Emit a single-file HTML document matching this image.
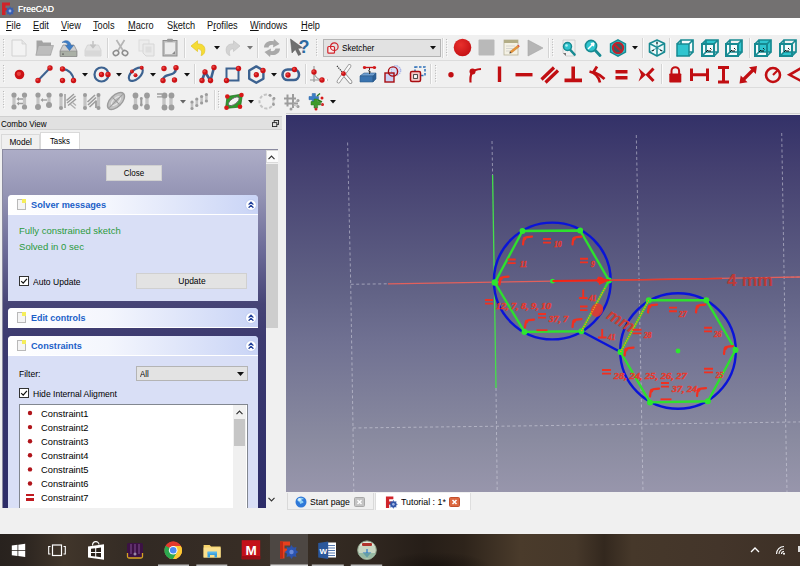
<!DOCTYPE html>
<html><head><meta charset="utf-8"><title>FreeCAD</title>
<style>
*{box-sizing:border-box;margin:0;padding:0}
html,body{width:800px;height:566px;overflow:hidden;background:#f0f0f0;font-family:"Liberation Sans",sans-serif;font-size:9px;color:#000}
.a{position:absolute}
#title{left:0;top:0;width:800px;height:17.5px;background:#737171}
#title span{position:absolute;left:18px;top:3px;color:#fff;font-size:9.8px;transform:scaleX(.885);transform-origin:0 50%;text-shadow:0 0 .5px #fff}
#menu{left:0;top:17.5px;width:800px;height:17.5px;background:#fff}
#menu span{position:absolute;top:2.7px;font-size:10px;transform:scaleX(.92);transform-origin:0 50%;color:#111}
#tb{left:0;top:35px;width:800px;height:78px;background:#f0f0f0}
.hl{position:absolute;left:0;width:800px;height:1px;background:#dcdcdc}
#combo{left:0;top:113px;width:286px;height:397px;background:#f0f0f0}
#view{left:285.5px;top:115px;width:514.5px;height:377.5px;background:linear-gradient(#333168 0%,#444070 14%,#626386 47%,#707192 60%,#8a8ba0 86%,#9896ac 100%)}
#tabs{left:286px;top:492px;width:514px;height:21px;background:#f0f0f0}
#status{left:0;top:510px;width:800px;height:24px;background:#f0f0f0}
#taskbar{left:0;top:534px;width:800px;height:32px;background:#2b231d;box-shadow:inset 0 1px 0 #15110e}

#cvtitle{left:0;top:115.5px;width:282px;height:14.5px;background:#e1e1e1;border-top:1px solid #d0d0d0;border-bottom:1px solid #d0d0d0}
#cvtitle span{position:absolute;left:1px;top:2.5px;font-size:9.3px;transform:scaleX(.87);transform-origin:0 50%}
.tab{position:absolute;font-size:9.3px;text-align:center}
#tabModel{left:1px;top:134px;width:39px;height:15px;background:#f0f0f0;border:1px solid #d9d9d9;border-bottom:none;padding-top:2px}
#tabTasks{left:40px;top:132px;width:40px;height:17px;background:#fff;border:1px solid #d9d9d9;border-bottom:none;padding-top:3px}
#panel{left:2px;top:149px;width:276px;height:359px;background:linear-gradient(#adadc7 0%,#9494b4 12.5%,#6c6b98 28%,#464476 43%,#3d3b70 52%,#2c2c68 100%);border-left:1px solid #8a8aa0;border-top:1px solid #8a8aa0;overflow:hidden}
.btn{position:absolute;background:#e3e3e3;border:1px solid #d0d0d0;font-size:9.3px;text-align:center}
.box{position:absolute;left:5px;width:250px;border-radius:4px 4px 0 0;overflow:hidden;background:#d9dff6}
.box .hd{position:absolute;left:0;top:0;width:100%;height:20px;background:linear-gradient(90deg,#ffffff,#f4f6fd 40%,#c9d4f6);border-bottom:1px solid #fff}
.box .hd b{position:absolute;left:23px;top:4px;font-size:9.4px;color:#2060c8;font-weight:bold;transform-origin:0 50%;white-space:nowrap}
.pg{position:absolute;left:9px;top:4px;width:9px;height:11px;background:#f4f4f4;border:1px solid #b9b9b9}
.pg:after{content:"";position:absolute;right:-1px;top:-1px;width:4px;height:4px;background:#f5ee5a}
.chev{position:absolute;left:238px;top:5px;width:10px;height:10px;border-radius:5px;background:#fff;border:1px solid #c5cff0}
.cb{position:absolute;width:10px;height:10px;background:#fff;border:1px solid #333}
.t{position:absolute;font-size:9.8px;white-space:nowrap;transform-origin:0 50%;transform:scaleX(.949)}
.g{color:#2b9a3d}
</style></head><body>
<div id="title" class="a"><svg class="a" style="left:1px;top:2px" width="14" height="14" viewBox="0 0 14 14"><path d="M1 0.5h8v3H4.5v2.5H8v3H4.5V13H1z" fill="#d0242a"/><g fill="#3a5fb0"><circle cx="9" cy="9" r="3.4"/><path d="M9 4.2l1 1.6h-2zM9 13.8l1-1.6h-2zM4.2 9l1.6 1v-2zM13.8 9l-1.6 1v-2zM5.6 5.6l1.9.5-1.4 1.4zM12.4 12.4l-1.9-.5 1.4-1.4zM12.4 5.6l-.5 1.9-1.4-1.4zM5.6 12.4l.5-1.9 1.4 1.4z"/></g><circle cx="9" cy="9" r="1.4" fill="#9fb4e6"/></svg><span>FreeCAD</span></div>
<div id="menu" class="a">
<span style="left:6px"><u>F</u>ile</span><span style="left:33px"><u>E</u>dit</span><span style="left:61px"><u>V</u>iew</span><span style="left:93px"><u>T</u>ools</span><span style="left:128px"><u>M</u>acro</span><span style="left:167px">S<u>k</u>etch</span><span style="left:207px">P<u>r</u>ofiles</span><span style="left:250px"><u>W</u>indows</span><span style="left:301px"><u>H</u>elp</span>
</div>
<div id="tb" class="a"><i class="hl" style="top:25px"></i><i class="hl" style="top:52px"></i><i class="hl" style="top:78px;background:#d0d0d0"></i><svg class="a" style="left:3px;top:4px" width="3" height="20"><rect x="0" y="0.0" width="1" height="1" fill="#b8b8b8"/><rect x="1" y="1.0" width="1" height="1" fill="#fff"/><rect x="0" y="2.6" width="1" height="1" fill="#b8b8b8"/><rect x="1" y="3.6" width="1" height="1" fill="#fff"/><rect x="0" y="5.2" width="1" height="1" fill="#b8b8b8"/><rect x="1" y="6.2" width="1" height="1" fill="#fff"/><rect x="0" y="7.8" width="1" height="1" fill="#b8b8b8"/><rect x="1" y="8.8" width="1" height="1" fill="#fff"/><rect x="0" y="10.4" width="1" height="1" fill="#b8b8b8"/><rect x="1" y="11.4" width="1" height="1" fill="#fff"/><rect x="0" y="13.0" width="1" height="1" fill="#b8b8b8"/><rect x="1" y="14.0" width="1" height="1" fill="#fff"/><rect x="0" y="15.6" width="1" height="1" fill="#b8b8b8"/><rect x="1" y="16.6" width="1" height="1" fill="#fff"/></svg><svg class="a" style="left:3px;top:30px" width="3" height="20"><rect x="0" y="0.0" width="1" height="1" fill="#b8b8b8"/><rect x="1" y="1.0" width="1" height="1" fill="#fff"/><rect x="0" y="2.6" width="1" height="1" fill="#b8b8b8"/><rect x="1" y="3.6" width="1" height="1" fill="#fff"/><rect x="0" y="5.2" width="1" height="1" fill="#b8b8b8"/><rect x="1" y="6.2" width="1" height="1" fill="#fff"/><rect x="0" y="7.8" width="1" height="1" fill="#b8b8b8"/><rect x="1" y="8.8" width="1" height="1" fill="#fff"/><rect x="0" y="10.4" width="1" height="1" fill="#b8b8b8"/><rect x="1" y="11.4" width="1" height="1" fill="#fff"/><rect x="0" y="13.0" width="1" height="1" fill="#b8b8b8"/><rect x="1" y="14.0" width="1" height="1" fill="#fff"/><rect x="0" y="15.6" width="1" height="1" fill="#b8b8b8"/><rect x="1" y="16.6" width="1" height="1" fill="#fff"/></svg><svg class="a" style="left:3px;top:56px" width="3" height="20"><rect x="0" y="0.0" width="1" height="1" fill="#b8b8b8"/><rect x="1" y="1.0" width="1" height="1" fill="#fff"/><rect x="0" y="2.6" width="1" height="1" fill="#b8b8b8"/><rect x="1" y="3.6" width="1" height="1" fill="#fff"/><rect x="0" y="5.2" width="1" height="1" fill="#b8b8b8"/><rect x="1" y="6.2" width="1" height="1" fill="#fff"/><rect x="0" y="7.8" width="1" height="1" fill="#b8b8b8"/><rect x="1" y="8.8" width="1" height="1" fill="#fff"/><rect x="0" y="10.4" width="1" height="1" fill="#b8b8b8"/><rect x="1" y="11.4" width="1" height="1" fill="#fff"/><rect x="0" y="13.0" width="1" height="1" fill="#b8b8b8"/><rect x="1" y="14.0" width="1" height="1" fill="#fff"/><rect x="0" y="15.6" width="1" height="1" fill="#b8b8b8"/><rect x="1" y="16.6" width="1" height="1" fill="#fff"/></svg><svg class="a" style="left:11.3px;top:3.8px" width="16" height="18" viewBox="0 0 16 18"><path d="M1 1h10l4 4v12H1z" fill="#f3f3f3" stroke="#d2d2d2" stroke-width="1"/><path d="M11 1v4h4" fill="#e6e6e6" stroke="#d2d2d2" stroke-width="0.8"/></svg><svg class="a" style="left:34.8px;top:3.8px" width="19" height="17" viewBox="0 0 19 17"><path d="M1.500 16V1.500h5.500l1 2h8V16z" fill="#a3a3a3"/><path d="M0.800 16.300L3.500 6.500h15L15.500 16.300z" fill="#bdbdbd" stroke="#9a9a9a" stroke-width="0.600"/></svg><svg class="a" style="left:59.0px;top:3.5px" width="19" height="19" viewBox="0 0 19 19"><path d="M1 12L4 6h11l3 6v5.5H1z" fill="#cfcfcf" stroke="#8f8f8f" stroke-width="0.8"/><rect x="1.300" y="12" width="16.400" height="5.500" fill="#aab0a6" stroke="#8a8a8a" stroke-width="0.600"/><rect x="3" y="14.5" width="2" height="1.2" fill="#666"/><path d="M3 3.500C6 0.500 11.500 1 12 6.500L14.500 6.500L10.500 11.500L6.500 6.500L9 6.500C8.800 3.800 5.500 3 3 3.500z" fill="#3d7ec8" stroke="#2b5f9e" stroke-width="0.500"/></svg><svg class="a" style="left:83.7px;top:4.5px" width="18" height="17" viewBox="0 0 18 17"><path d="M1 10L3.5 5h11L17 10v6H1z" fill="#e3e3e3" stroke="#cfcfcf" stroke-width="0.8"/><rect x="1.3" y="10.5" width="15.4" height="5" fill="#d8d8d8"/><path d="M9 1v6M6.5 4.5L9 7.5L11.5 4.5" stroke="#c2c2c2" stroke-width="1.5" fill="none"/></svg><i class="a" style="left:107px;top:3px;width:1px;height:20px;background:#d4d4d4"></i><i class="a" style="left:108px;top:3px;width:1px;height:20px;background:#fbfbfb"></i><svg class="a" style="left:112.0px;top:4.0px" width="17" height="18" viewBox="0 0 17 18"><path d="M4.5 1L11 11.5M12.5 1L6 11.5" stroke="#b5b5b5" stroke-width="1.7" fill="none"/><ellipse cx="4" cy="14" rx="2.8" ry="2.4" fill="none" stroke="#8d8d8d" stroke-width="1.6" transform="rotate(-30 4 14)"/><ellipse cx="13" cy="14" rx="2.8" ry="2.4" fill="none" stroke="#8d8d8d" stroke-width="1.6" transform="rotate(30 13 14)"/></svg><svg class="a" style="left:137.5px;top:4.0px" width="17" height="18" viewBox="0 0 17 18"><rect x="1" y="1" width="10" height="11" fill="#ececec" stroke="#dcdcdc"/><path d="M5 5h11v12h-8l-3-3z" fill="#eaeaea" stroke="#d6d6d6"/><rect x="7.5" y="7.5" width="6" height="6" fill="#dedede"/></svg><svg class="a" style="left:162.0px;top:3.0px" width="16" height="19" viewBox="0 0 16 19"><rect x="1" y="2.5" width="14" height="15.5" fill="#bdbdbd" stroke="#8f8f8f"/><rect x="3" y="4.5" width="10" height="11.5" fill="#ececec"/><rect x="5" y="0.8" width="6" height="3" rx="1" fill="#9a9a9a"/><path d="M13 13l-3 3h3z" fill="#8a8a8a"/></svg><i class="a" style="left:184px;top:3px;width:1px;height:20px;background:#d4d4d4"></i><i class="a" style="left:185px;top:3px;width:1px;height:20px;background:#fbfbfb"></i><svg class="a" style="left:190.0px;top:5.0px" width="17" height="16" viewBox="0 0 17 16"><path d="M1 6L7.5 0.8V4C13 3.5 16 7 14.5 12.5C14 14 12.5 15.3 11 15.5C12.5 12 11.5 8.7 7.5 8.8V11.5z" fill="#f5dc35" stroke="#e3c423" stroke-width="0.7" stroke-linejoin="round"/></svg><svg class="a" style="left:213.5px;top:11.0px" width="6" height="4"><path d="M0 0h6l-3 3.5z" fill="#111"/></svg><svg class="a" style="left:223.5px;top:5.0px" width="17" height="16" viewBox="0 0 17 16"><path d="M16 6L9.5 0.8V4C4 3.5 1 7 2.5 12.5C3 14 4.5 15.3 6 15.5C4.5 12 5.5 8.7 9.5 8.8V11.5z" fill="#d3d3d3" stroke="#c4c4c4" stroke-width="0.7" stroke-linejoin="round"/></svg><svg class="a" style="left:247px;top:11.0px" width="6" height="4"><path d="M0 0h6l-3 3.5z" fill="#777"/></svg><i class="a" style="left:257px;top:3px;width:1px;height:20px;background:#d4d4d4"></i><i class="a" style="left:258px;top:3px;width:1px;height:20px;background:#fbfbfb"></i><svg class="a" style="left:263.0px;top:3.5px" width="18" height="18" viewBox="0 0 18 18"><path d="M1 8.5C1 3.500 6 1 10.500 2.200L11 0L16.500 5L10 8.500L10.300 6C8 5.500 5.800 6.500 5.500 8.500z" fill="#a9a9a9"/><path d="M17 9.500C17 14.500 12 17 7.500 15.800L7 18L1.500 13L8 9.500L7.700 12C10 12.500 12.200 11.500 12.500 9.500z" fill="#a9a9a9"/></svg><i class="a" style="left:286px;top:3px;width:1px;height:20px;background:#d4d4d4"></i><i class="a" style="left:287px;top:3px;width:1px;height:20px;background:#fbfbfb"></i><svg class="a" style="left:289.0px;top:3.0px" width="22" height="19" viewBox="0 0 22 19"><path d="M1.5 1L3 15L6.3 11.5L9.5 17.5L12 16.2L8.9 10.4L13.5 9.8z" fill="#6f6f6f" stroke="#555" stroke-width="0.5"/><text x="9.5" y="14.5" font-family="Liberation Sans, sans-serif" font-weight="bold" font-size="18" fill="#2d6a9f">?</text></svg><svg class="a" style="left:316px;top:4px" width="3" height="20"><rect x="0" y="0.0" width="1" height="1" fill="#b8b8b8"/><rect x="1" y="1.0" width="1" height="1" fill="#fff"/><rect x="0" y="2.6" width="1" height="1" fill="#b8b8b8"/><rect x="1" y="3.6" width="1" height="1" fill="#fff"/><rect x="0" y="5.2" width="1" height="1" fill="#b8b8b8"/><rect x="1" y="6.2" width="1" height="1" fill="#fff"/><rect x="0" y="7.8" width="1" height="1" fill="#b8b8b8"/><rect x="1" y="8.8" width="1" height="1" fill="#fff"/><rect x="0" y="10.4" width="1" height="1" fill="#b8b8b8"/><rect x="1" y="11.4" width="1" height="1" fill="#fff"/><rect x="0" y="13.0" width="1" height="1" fill="#b8b8b8"/><rect x="1" y="14.0" width="1" height="1" fill="#fff"/><rect x="0" y="15.6" width="1" height="1" fill="#b8b8b8"/><rect x="1" y="16.6" width="1" height="1" fill="#fff"/></svg><div class="a" style="left:323px;top:4px;width:118px;height:18px;background:#e2e2e2;border:1px solid #b4b4b4"></div><svg class="a" style="left:327.0px;top:6.5px" width="12" height="12" viewBox="0 0 12 12"><rect x="0.8" y="4.5" width="6.7" height="6.7" rx="1" fill="#fbeaea" stroke="#d0222a" stroke-width="1.2"/><circle cx="7.3" cy="4.7" r="3.8" fill="none" stroke="#d0222a" stroke-width="1.2"/></svg><span class="t" style="left:342px;top:7.2px;transform:scaleX(.835)">Sketcher</span><svg class="a" style="left:430px;top:11.0px" width="6" height="4"><path d="M0 0h6l-3 3.5z" fill="#111"/></svg><i class="a" style="left:442px;top:3px;width:1px;height:20px;background:#d4d4d4"></i><i class="a" style="left:443px;top:3px;width:1px;height:20px;background:#fbfbfb"></i><svg class="a" style="left:446px;top:4px" width="3" height="20"><rect x="0" y="0.0" width="1" height="1" fill="#b8b8b8"/><rect x="1" y="1.0" width="1" height="1" fill="#fff"/><rect x="0" y="2.6" width="1" height="1" fill="#b8b8b8"/><rect x="1" y="3.6" width="1" height="1" fill="#fff"/><rect x="0" y="5.2" width="1" height="1" fill="#b8b8b8"/><rect x="1" y="6.2" width="1" height="1" fill="#fff"/><rect x="0" y="7.8" width="1" height="1" fill="#b8b8b8"/><rect x="1" y="8.8" width="1" height="1" fill="#fff"/><rect x="0" y="10.4" width="1" height="1" fill="#b8b8b8"/><rect x="1" y="11.4" width="1" height="1" fill="#fff"/><rect x="0" y="13.0" width="1" height="1" fill="#b8b8b8"/><rect x="1" y="14.0" width="1" height="1" fill="#fff"/><rect x="0" y="15.6" width="1" height="1" fill="#b8b8b8"/><rect x="1" y="16.6" width="1" height="1" fill="#fff"/></svg><svg class="a" style="left:452.5px;top:3.0px" width="19" height="19" viewBox="0 0 19 19"><defs><radialGradient id="rg" cx="0.4" cy="0.35" r="0.7"><stop offset="0" stop-color="#e8302c"/><stop offset="1" stop-color="#c41014"/></radialGradient></defs><circle cx="9.5" cy="9.5" r="8.8" fill="url(#rg)"/></svg><svg class="a" style="left:477.5px;top:4.0px" width="17" height="17" viewBox="0 0 17 17"><rect x="0.5" y="0.5" width="16" height="16" rx="1" fill="#b9b9b9"/></svg><svg class="a" style="left:502.5px;top:4.0px" width="17" height="17" viewBox="0 0 17 17"><rect x="1" y="1" width="14" height="15" fill="#f4f1e4" stroke="#b8b39a" stroke-width="0.8"/><rect x="1" y="1" width="14" height="3" fill="#b3ad86"/><path d="M3 7h9M3 9.5h7M3 12h5" stroke="#c9c9c9" stroke-width="0.7"/><path d="M7 12.5L14.5 6.5L16 8L8.5 14z" fill="#e8963a" stroke="#b86a1e" stroke-width="0.4"/><path d="M7 12.5L6.3 14.6L8.5 14z" fill="#333"/><path d="M14.5 6.5L15.4 5.8L16.8 7.3L16 8z" fill="#d8484a"/></svg><svg class="a" style="left:526.5px;top:3.5px" width="17" height="18" viewBox="0 0 17 18"><path d="M1 1L16 9L1 17z" fill="#b5b5b5" stroke="#a5a5a5" stroke-width="0.6"/></svg><i class="a" style="left:548px;top:3px;width:1px;height:20px;background:#d4d4d4"></i><i class="a" style="left:549px;top:3px;width:1px;height:20px;background:#fbfbfb"></i><svg class="a" style="left:552px;top:4px" width="3" height="20"><rect x="0" y="0.0" width="1" height="1" fill="#b8b8b8"/><rect x="1" y="1.0" width="1" height="1" fill="#fff"/><rect x="0" y="2.6" width="1" height="1" fill="#b8b8b8"/><rect x="1" y="3.6" width="1" height="1" fill="#fff"/><rect x="0" y="5.2" width="1" height="1" fill="#b8b8b8"/><rect x="1" y="6.2" width="1" height="1" fill="#fff"/><rect x="0" y="7.8" width="1" height="1" fill="#b8b8b8"/><rect x="1" y="8.8" width="1" height="1" fill="#fff"/><rect x="0" y="10.4" width="1" height="1" fill="#b8b8b8"/><rect x="1" y="11.4" width="1" height="1" fill="#fff"/><rect x="0" y="13.0" width="1" height="1" fill="#b8b8b8"/><rect x="1" y="14.0" width="1" height="1" fill="#fff"/><rect x="0" y="15.6" width="1" height="1" fill="#b8b8b8"/><rect x="1" y="16.6" width="1" height="1" fill="#fff"/></svg><svg class="a" style="left:560.5px;top:3.5px" width="16" height="18" viewBox="0 0 16 18"><path d="M2 1h12v16H5l-3-3z" fill="#f1f1f1" stroke="#c9c9c9" stroke-width="0.8"/><path d="M2 14l3 3v-3z" fill="#777"/><path d="M8.5 10L13.5 15.5" stroke="#178a92" stroke-width="2.6" stroke-linecap="round"/><circle cx="6.5" cy="7.5" r="4" fill="#2fc5cf" stroke="#178a92" stroke-width="1.5"/><circle cx="5.5" cy="6.5" r="1.3" fill="#b8f0f4"/></svg><svg class="a" style="left:584.0px;top:3.5px" width="18" height="18" viewBox="0 0 18 18"><path d="M10 10L16 16.5" stroke="#178a92" stroke-width="2.8" stroke-linecap="round"/><circle cx="7" cy="7" r="5.6" fill="#2fc5cf" stroke="#178a92" stroke-width="1.6"/><path d="M4 10L10 4M10 4L6.8 4.8M10 4L9.2 7.2" stroke="#fff" stroke-width="1.5" fill="none"/></svg><svg class="a" style="left:608.5px;top:3.5px" width="18" height="18" viewBox="0 0 18 18"><path d="M9 0.8L16.5 5v8L9 17.2L1.5 13V5z" fill="#2fc5cf" stroke="#178a92" stroke-width="1.4"/><circle cx="9" cy="9" r="5.2" fill="#3a5a60" stroke="#c2202a" stroke-width="2"/><path d="M5.5 5.5L12.5 12.5" stroke="#c2202a" stroke-width="2.2"/></svg><svg class="a" style="left:631.5px;top:11.0px" width="6" height="4"><path d="M0 0h6l-3 3.5z" fill="#111"/></svg><i class="a" style="left:642px;top:3px;width:1px;height:20px;background:#d4d4d4"></i><i class="a" style="left:643px;top:3px;width:1px;height:20px;background:#fbfbfb"></i><svg class="a" style="left:647.5px;top:3.5px" width="18" height="18" viewBox="0 0 18 18"><path d="M9 1L16.5 4.5V13L9 17L1.5 13V4.5z" fill="#eef9fa" stroke="#178a92" stroke-width="1.6" stroke-linejoin="round"/><path d="M1.5 4.5L9 8.5L16.5 4.5M9 8.5V17" stroke="#178a92" stroke-width="1.5" fill="none"/><path d="M9 1v7.5M1.5 13L9 9M16.5 13L9 9" stroke="#178a92" stroke-width="0.8" fill="none"/><path d="M4 12l2-1M12 11l2 1M9 3v2" stroke="#111" stroke-width="1"/></svg><i class="a" style="left:669px;top:3px;width:1px;height:20px;background:#d4d4d4"></i><i class="a" style="left:670px;top:3px;width:1px;height:20px;background:#fbfbfb"></i><svg class="a" style="left:676.0px;top:3.5px" width="18" height="18" viewBox="0 0 18 18"><path d="M5 1h12v12H5z" fill="#f4fbfc"/><path d="M5 1h12v12H5zM1 5L5 1M13 5l4-4M13 17l4-4M1 17l4-4" fill="none" stroke="#178a92" stroke-width="1.700"/><path d="M1 5h12v12H1z" fill="#2fc5cf" stroke="#178a92" stroke-width="1.5"/></svg><svg class="a" style="left:700.5px;top:3.5px" width="18" height="18" viewBox="0 0 18 18"><path d="M1 5h12v12H1z" fill="#f4fbfc"/><path d="M1 5L5 1h12l-4 4z" fill="#2fc5cf"/><path d="M5 1h12v12H5zM1 5L5 1M13 5l4-4M13 17l4-4M1 17l4-4" fill="none" stroke="#178a92" stroke-width="1.700"/><path d="M1 5h12v12H1z" fill="none" stroke="#178a92" stroke-width="2"/><path d="M5 13l2-2M9 9l1.5 1.5M7 12h3" stroke="#111" stroke-width="1"/></svg><svg class="a" style="left:725.0px;top:3.5px" width="18" height="18" viewBox="0 0 18 18"><path d="M1 5h12v12H1z" fill="#f4fbfc"/><path d="M13 5l4-4v12l-4 4z" fill="#2fc5cf"/><path d="M5 1h12v12H5zM1 5L5 1M13 5l4-4M13 17l4-4M1 17l4-4" fill="none" stroke="#178a92" stroke-width="1.700"/><path d="M1 5h12v12H1z" fill="none" stroke="#178a92" stroke-width="2"/><path d="M5 13l2-2M9 9l1.5 1.5M7 12h3" stroke="#111" stroke-width="1"/></svg><i class="a" style="left:749px;top:3px;width:1px;height:20px;background:#d4d4d4"></i><i class="a" style="left:750px;top:3px;width:1px;height:20px;background:#fbfbfb"></i><svg class="a" style="left:754.0px;top:3.5px" width="18" height="18" viewBox="0 0 18 18"><path d="M1 5h12v12H1z" fill="#f4fbfc"/><path d="M5 1h12v12H5z" fill="#2fc5cf"/><path d="M5 1h12v12H5zM1 5L5 1M13 5l4-4M13 17l4-4M1 17l4-4" fill="none" stroke="#178a92" stroke-width="1.700"/><path d="M1 5h12v12H1z" fill="none" stroke="#178a92" stroke-width="2"/><path d="M5 13l2-2M9 9l1.5 1.5M7 12h3" stroke="#111" stroke-width="1"/></svg><svg class="a" style="left:779.0px;top:3.5px" width="18" height="18" viewBox="0 0 18 18"><path d="M1 5h12v12H1z" fill="#f4fbfc"/><path d="M1 17l4-4h12l-4 4z" fill="#2fc5cf"/><path d="M5 1h12v12H5zM1 5L5 1M13 5l4-4M13 17l4-4M1 17l4-4" fill="none" stroke="#178a92" stroke-width="1.700"/><path d="M1 5h12v12H1z" fill="none" stroke="#178a92" stroke-width="2"/><path d="M5 13l2-2M9 9l1.5 1.5M7 12h3" stroke="#111" stroke-width="1"/></svg><svg class="a" style="left:0;top:26px" width="800" height="26" viewBox="0 61 800 26"><circle cx="19.5" cy="74.5" r="4.8" fill="#cc1216"/><circle cx="18.9" cy="73.8" r="2.16" fill="#e8403c"/><path d="M38 80.5L50 68" stroke="#3c6290" stroke-width="2"/><circle cx="38" cy="80.5" r="2.7" fill="#cc1216"/><circle cx="37.4" cy="79.8" r="1.22" fill="#e8403c"/><circle cx="50" cy="68" r="2.7" fill="#cc1216"/><circle cx="49.4" cy="67.3" r="1.22" fill="#e8403c"/><path d="M62.5 69A11.5 11.5 0 0 1 73.5 80.5" stroke="#3c6290" stroke-width="2" fill="none"/><circle cx="62.5" cy="69" r="2.7" fill="#cc1216"/><circle cx="61.9" cy="68.3" r="1.22" fill="#e8403c"/><circle cx="62.5" cy="80.5" r="2.7" fill="#cc1216"/><circle cx="61.9" cy="79.8" r="1.22" fill="#e8403c"/><circle cx="73.5" cy="80.5" r="2.7" fill="#cc1216"/><circle cx="72.9" cy="79.8" r="1.22" fill="#e8403c"/><circle cx="101.5" cy="74.5" r="7" fill="none" stroke="#3c6290" stroke-width="2.2"/><circle cx="101.5" cy="74.5" r="2.7" fill="#cc1216"/><circle cx="100.9" cy="73.8" r="1.22" fill="#e8403c"/><circle cx="108" cy="74.5" r="2.7" fill="#cc1216"/><circle cx="107.4" cy="73.8" r="1.22" fill="#e8403c"/><ellipse cx="135.8" cy="74.3" rx="8.5" ry="4.6" transform="rotate(-42 135.8 74.3)" fill="none" stroke="#3c6290" stroke-width="2.2"/><circle cx="132" cy="71.5" r="2" fill="#cc1216"/><circle cx="131.4" cy="70.8" r="0.90" fill="#e8403c"/><circle cx="141.7" cy="67.8" r="2" fill="#cc1216"/><circle cx="141.1" cy="67.1" r="0.90" fill="#e8403c"/><circle cx="135.5" cy="75.2" r="2" fill="#cc1216"/><circle cx="134.9" cy="74.5" r="0.90" fill="#e8403c"/><path d="M163 80.5C163 72 176 78 176 68" stroke="#3c6290" stroke-width="2.400" fill="none"/><circle cx="164" cy="68.5" r="2.7" fill="#cc1216"/><circle cx="163.4" cy="67.8" r="1.22" fill="#e8403c"/><circle cx="176" cy="67.7" r="2.7" fill="#cc1216"/><circle cx="175.4" cy="67.0" r="1.22" fill="#e8403c"/><circle cx="163" cy="80.5" r="2.7" fill="#cc1216"/><circle cx="162.4" cy="79.8" r="1.22" fill="#e8403c"/><circle cx="174.5" cy="80" r="2.7" fill="#cc1216"/><circle cx="173.9" cy="79.3" r="1.22" fill="#e8403c"/><path d="M202 80.5L205 72L210.5 80.5L214 67.5" stroke="#3c6290" stroke-width="2.600" fill="none"/><circle cx="202" cy="80.5" r="2.7" fill="#cc1216"/><circle cx="201.4" cy="79.8" r="1.22" fill="#e8403c"/><circle cx="205" cy="72" r="2.7" fill="#cc1216"/><circle cx="204.4" cy="71.3" r="1.22" fill="#e8403c"/><circle cx="210.5" cy="80.5" r="2.7" fill="#cc1216"/><circle cx="209.9" cy="79.8" r="1.22" fill="#e8403c"/><circle cx="214" cy="67.5" r="2.7" fill="#cc1216"/><circle cx="213.4" cy="66.8" r="1.22" fill="#e8403c"/><rect x="226.5" y="68.5" width="12" height="12" fill="none" stroke="#3c6290" stroke-width="2"/><circle cx="238.5" cy="68.5" r="2.7" fill="#cc1216"/><circle cx="237.9" cy="67.8" r="1.22" fill="#e8403c"/><circle cx="226.5" cy="80.5" r="2.7" fill="#cc1216"/><circle cx="225.9" cy="79.8" r="1.22" fill="#e8403c"/><path d="M256.3 66.400L263.400 70.500V78.700L256.300 82.800L249.200 78.700V70.500z" fill="none" stroke="#3c6290" stroke-width="2.400" stroke-linejoin="round"/><circle cx="256.3" cy="74.8" r="2.7" fill="#cc1216"/><circle cx="255.70000000000002" cy="74.1" r="1.22" fill="#e8403c"/><circle cx="263" cy="70.5" r="2.7" fill="#cc1216"/><circle cx="262.4" cy="69.8" r="1.22" fill="#e8403c"/><rect x="282.5" y="69.5" width="16.5" height="10.5" rx="5.2" fill="none" stroke="#3c6290" stroke-width="2.600"/><circle cx="288" cy="75" r="2.7" fill="#cc1216"/><circle cx="287.4" cy="74.3" r="1.22" fill="#e8403c"/><circle cx="294.5" cy="69.5" r="2.7" fill="#cc1216"/><circle cx="293.9" cy="68.8" r="1.22" fill="#e8403c"/><path d="M314 66v16M310 80h18" stroke="#9a9a9a" stroke-width="1.2"/><path d="M314 72Q315 79 322 80" stroke="#888" stroke-width="1" fill="none"/><path d="M322 80h5" stroke="#fff" stroke-width="2"/><circle cx="314" cy="72" r="2.7" fill="#cc1216"/><circle cx="313.4" cy="71.3" r="1.22" fill="#e8403c"/><circle cx="322" cy="80" r="2.7" fill="#cc1216"/><circle cx="321.4" cy="79.3" r="1.22" fill="#e8403c"/><path d="M343.500 73.700L350.500 82" stroke="#8a8a8a" stroke-width="3.800" stroke-linecap="round"/><path d="M343.500 73.700L350.500 82" stroke="#fafafa" stroke-width="2.200" stroke-linecap="round"/><path d="M349.500 66L338.500 81.500" stroke="#8a8a8a" stroke-width="3.800" stroke-linecap="round"/><path d="M349.500 66L338.500 81.500" stroke="#fafafa" stroke-width="2.200" stroke-linecap="round"/><path d="M337 66l6 7" stroke="#333" stroke-width="1.200" stroke-dasharray="1.200 1"/><circle cx="343.5" cy="73.7" r="2.4" fill="#cc1216"/><circle cx="342.9" cy="73.0" r="1.08" fill="#e8403c"/><path d="M360 76l4-3h12l-3 3z" fill="#6f9fd0" stroke="#2b5a8a" stroke-width="0.6"/><path d="M360 76h13v6h-13z" fill="#3a74b0" stroke="#2b5a8a" stroke-width="0.6"/><path d="M373 76l3-3v6l-3 3z" fill="#2c5f95" stroke="#2b5a8a" stroke-width="0.6"/><path d="M364.5 67.5h10" stroke="#cc1216" stroke-width="1.4"/><path d="M369.5 68v2l-1 1l2 1l-1.5 1l1 1" stroke="#333" stroke-width="1" fill="none"/><circle cx="364.5" cy="67.5" r="1.6" fill="#cc1216"/><circle cx="363.9" cy="66.8" r="0.72" fill="#e8403c"/><circle cx="374.5" cy="67.5" r="1.6" fill="#cc1216"/><circle cx="373.9" cy="66.8" r="0.72" fill="#e8403c"/><circle cx="396" cy="70.5" r="4.8" fill="#d6dcf6" stroke="#8fa0e0" stroke-width="1" stroke-dasharray="1.5 1"/><rect x="385" y="73" width="9" height="9" fill="#c9d2f4" stroke="#a80c10" stroke-width="1.4"/><circle cx="393" cy="71.5" r="4.6" fill="none" stroke="#a80c10" stroke-width="1.4"/><rect x="415" y="67" width="10" height="8.5" fill="none" stroke="#2d6fb8" stroke-width="1.5" stroke-dasharray="2.5 1.5"/><rect x="410.5" y="71.5" width="10" height="10" rx="1.5" fill="#f6c9c9" stroke="#a80c10" stroke-width="1.5"/><rect x="413.6" y="74.6" width="3.8" height="3.8" fill="#fff" stroke="#333" stroke-width="0.9"/><circle cx="451" cy="74.8" r="2.7" fill="#c10e12"/><path d="M470.5 82.5C470 75 471 69.5 481 69" stroke="#c10e12" stroke-width="2.2" fill="none"/><circle cx="472.5" cy="71.5" r="3" fill="#c10e12"/><path d="M499.5 66.5v15.5" stroke="#c10e12" stroke-width="3.4"/><path d="M515.500 74.700h17" stroke="#c10e12" stroke-width="3.400"/><path d="M541.5 79.5L554 67.5M545.5 82.5L558 70.5" stroke="#c10e12" stroke-width="3.200"/><path d="M564.500 80.400h17.500M573.200 80.700V66.500" stroke="#c10e12" stroke-width="3.600"/><path d="M597 66.500L593.500 72Q599 74 604.500 79" stroke="#c10e12" stroke-width="2.800" fill="none"/><path d="M589.500 71.500Q598 73.500 600 82.500" stroke="#c10e12" stroke-width="2.600" fill="none"/><path d="M615.500 71.800h12M615.500 77.800h12" stroke="#c10e12" stroke-width="3.400"/><path d="M638.500 68L646 74.700L638.500 81.500L641 74.700z" fill="#c10e12"/><path d="M653.500 68.500L647.500 74.700L653.500 81" stroke="#c10e12" stroke-width="3" fill="none"/><path d="M671.5 74v-3a3.8 3.8 0 0 1 7.6 0v3" stroke="#c10e12" stroke-width="2" fill="none"/><rect x="669.3" y="73.5" width="12" height="9" rx="0.8" fill="#c10e12"/><path d="M691.500 68.500v12.500M707.500 68.500v12.500M691.500 74.800h16" stroke="#c10e12" stroke-width="3"/><path d="M718 67.500h11M718 82h11M723.500 67.500v14.500" stroke="#c10e12" stroke-width="3"/><path d="M742 81L754.500 68.500" stroke="#c10e12" stroke-width="3.200"/><path d="M739.500 83.500l1.200-8l6.800 6.800zM757 66l-8 1.200l6.800 6.800z" fill="#c10e12"/><circle cx="773" cy="75" r="7" fill="none" stroke="#c10e12" stroke-width="2.600"/><path d="M773 75l5.500-5.500" stroke="#c10e12" stroke-width="2.200"/><path d="M803 67L789.500 74.800L803 82z" stroke="#c10e12" stroke-width="2.600" fill="none"/></svg><svg class="a" style="left:82px;top:38.0px" width="6" height="4"><path d="M0 0h6l-3 3.5z" fill="#111"/></svg><svg class="a" style="left:115.5px;top:38.0px" width="6" height="4"><path d="M0 0h6l-3 3.5z" fill="#111"/></svg><svg class="a" style="left:149.5px;top:38.0px" width="6" height="4"><path d="M0 0h6l-3 3.5z" fill="#111"/></svg><svg class="a" style="left:183.5px;top:38.0px" width="6" height="4"><path d="M0 0h6l-3 3.5z" fill="#111"/></svg><svg class="a" style="left:270.5px;top:38.0px" width="6" height="4"><path d="M0 0h6l-3 3.5z" fill="#111"/></svg><i class="a" style="left:194px;top:29px;width:1px;height:20px;background:#d4d4d4"></i><i class="a" style="left:195px;top:29px;width:1px;height:20px;background:#fbfbfb"></i><i class="a" style="left:305px;top:29px;width:1px;height:20px;background:#d4d4d4"></i><i class="a" style="left:306px;top:29px;width:1px;height:20px;background:#fbfbfb"></i><i class="a" style="left:430px;top:29px;width:1px;height:20px;background:#d4d4d4"></i><i class="a" style="left:431px;top:29px;width:1px;height:20px;background:#fbfbfb"></i><svg class="a" style="left:435px;top:30px" width="3" height="20"><rect x="0" y="0.0" width="1" height="1" fill="#b8b8b8"/><rect x="1" y="1.0" width="1" height="1" fill="#fff"/><rect x="0" y="2.6" width="1" height="1" fill="#b8b8b8"/><rect x="1" y="3.6" width="1" height="1" fill="#fff"/><rect x="0" y="5.2" width="1" height="1" fill="#b8b8b8"/><rect x="1" y="6.2" width="1" height="1" fill="#fff"/><rect x="0" y="7.8" width="1" height="1" fill="#b8b8b8"/><rect x="1" y="8.8" width="1" height="1" fill="#fff"/><rect x="0" y="10.4" width="1" height="1" fill="#b8b8b8"/><rect x="1" y="11.4" width="1" height="1" fill="#fff"/><rect x="0" y="13.0" width="1" height="1" fill="#b8b8b8"/><rect x="1" y="14.0" width="1" height="1" fill="#fff"/><rect x="0" y="15.6" width="1" height="1" fill="#b8b8b8"/><rect x="1" y="16.6" width="1" height="1" fill="#fff"/></svg><i class="a" style="left:661px;top:29px;width:1px;height:20px;background:#d4d4d4"></i><i class="a" style="left:662px;top:29px;width:1px;height:20px;background:#fbfbfb"></i><svg class="a" style="left:0;top:53px" width="800" height="26" viewBox="0 87 800 26"><path d="M14 94v12M24.5 94v12" stroke="#c4c4c4" stroke-width="3.2"/><circle cx="14" cy="94" r="2.6" fill="#9c9c9c"/><circle cx="24.5" cy="94" r="2.6" fill="#9c9c9c"/><circle cx="14" cy="106" r="2.6" fill="#9c9c9c"/><circle cx="24.5" cy="106" r="2.6" fill="#9c9c9c"/><path d="M23 98h-5M23 102.5h-5" stroke="#9c9c9c" stroke-width="1.4"/><path d="M16.5 98l2.5-2v4zM16.5 102.5l2.5-2v4z" fill="#9c9c9c"/><path d="M38 94v12" stroke="#c4c4c4" stroke-width="3.2"/><path d="M49 94v10" stroke="#c4c4c4" stroke-width="3.2"/><circle cx="38" cy="94" r="2.6" fill="#9c9c9c"/><circle cx="49" cy="94" r="2.6" fill="#9c9c9c"/><circle cx="38" cy="106" r="3" fill="#9c9c9c"/><circle cx="49" cy="104" r="3" fill="#9c9c9c"/><path d="M47 99h-5" stroke="#9c9c9c" stroke-width="1.4"/><path d="M40.5 99l2.5-2v4z" fill="#9c9c9c"/><path d="M61 94v13" stroke="#c4c4c4" stroke-width="3.2"/><circle cx="61" cy="94" r="2" fill="#9c9c9c"/><circle cx="61" cy="107" r="2" fill="#9c9c9c"/><path d="M65 93v14" stroke="#9c9c9c" stroke-width="1.5"/><path d="M66.5 99.5L74 93M67 102L75.5 95M68 104.5L76 98" stroke="#9c9c9c" stroke-width="1.5"/><path d="M70 103l5.5 4.5M72.5 101.5l3.5 3" stroke="#b0b0b0" stroke-width="1.3"/><path d="M85 94v13M98.5 94v13" stroke="#c4c4c4" stroke-width="3.2"/><circle cx="85" cy="94" r="2" fill="#9c9c9c"/><circle cx="85" cy="107" r="2" fill="#9c9c9c"/><circle cx="98.5" cy="94" r="2" fill="#9c9c9c"/><circle cx="98.5" cy="107" r="2" fill="#9c9c9c"/><path d="M87.5 101L95 94M88 104L96 96.5M89.5 106L96.5 99.5" stroke="#9c9c9c" stroke-width="1.6"/><path d="M96 100v7" stroke="#9c9c9c" stroke-width="1.8"/><g transform="rotate(-45 116 100)"><ellipse cx="116" cy="100" rx="10.500" ry="5.800" fill="#c4c4c4" stroke="#9c9c9c" stroke-width="1.4"/><ellipse cx="116" cy="100" rx="5.5" ry="2.6" fill="none" stroke="#e6e6e6" stroke-width="1.2"/><path d="M106.5 100h19M116 95v10" stroke="#9c9c9c" stroke-width="1.1"/></g><path d="M135.5 94.5v11" stroke="#c4c4c4" stroke-width="3.4"/><path d="M147 94.5v11" stroke="#c4c4c4" stroke-width="3.4"/><circle cx="135.5" cy="94.5" r="2.9" fill="#9c9c9c"/><circle cx="147" cy="94.5" r="2.9" fill="#9c9c9c"/><circle cx="135.5" cy="106" r="2.9" fill="#9c9c9c"/><circle cx="147" cy="106" r="2.9" fill="#9c9c9c"/><path d="M141.3 97.5v6.5" stroke="#9c9c9c" stroke-width="2"/><circle cx="141.3" cy="97.5" r="1.4" fill="#9c9c9c"/><circle cx="141.3" cy="104" r="1.4" fill="#9c9c9c"/><path d="M157 93h5M157 95.8h5" stroke="#9c9c9c" stroke-width="1.3"/><path d="M164 95v11M171 95v11" stroke="#c4c4c4" stroke-width="3.4"/><circle cx="164.5" cy="94.5" r="2.9" fill="#9c9c9c"/><circle cx="171.5" cy="94.5" r="2.9" fill="#9c9c9c"/><circle cx="164.5" cy="106.5" r="2.9" fill="#9c9c9c"/><circle cx="171.5" cy="106.5" r="2.9" fill="#9c9c9c"/><path d="M192 101v6" stroke="#c4c4c4" stroke-width="2.6"/><circle cx="192" cy="101" r="1.6" fill="#9c9c9c"/><circle cx="192" cy="107.5" r="1.6" fill="#9c9c9c"/><path d="M196.8 98v6" stroke="#c4c4c4" stroke-width="2.6"/><circle cx="196.8" cy="98" r="1.6" fill="#9c9c9c"/><circle cx="196.8" cy="104.5" r="1.6" fill="#9c9c9c"/><path d="M201.6 95.5v6" stroke="#c4c4c4" stroke-width="2.6"/><circle cx="201.6" cy="95.5" r="1.6" fill="#9c9c9c"/><circle cx="201.6" cy="102.0" r="1.6" fill="#9c9c9c"/><path d="M206.4 93.5v6" stroke="#c4c4c4" stroke-width="2.6"/><circle cx="206.4" cy="93.5" r="1.6" fill="#9c9c9c"/><circle cx="206.4" cy="100.0" r="1.6" fill="#9c9c9c"/><path d="M227 95.5L242.5 93L240.5 106L225.5 107.5z" fill="#2f9a2f" stroke="#1d6f1d" stroke-width="0.7"/><ellipse cx="233.8" cy="100.3" rx="6.2" ry="2.9" transform="rotate(-35 233.8 100.3)" fill="#f4f4f4" stroke="#6a6a6a" stroke-width="0.9"/><circle cx="227.3" cy="95.5" r="2.3" fill="#d81818"/><circle cx="241.5" cy="94" r="2.3" fill="#d81818"/><circle cx="240" cy="105.8" r="2.3" fill="#d81818"/><circle cx="226.5" cy="106.8" r="2.3" fill="#d81818"/><circle cx="266.5" cy="100.5" r="7" fill="none" stroke="#c4c4c4" stroke-width="2" stroke-dasharray="3.2 1.8"/><circle cx="270" cy="94.3" r="1.4" fill="#9c9c9c"/><circle cx="274" cy="97.5" r="1.4" fill="#9c9c9c"/><circle cx="273.5" cy="103.5" r="1.4" fill="#9c9c9c"/><path d="M287.5 93.5v12M293 93v14M284 97.5h12M284.5 102.5h13.5" stroke="#9c9c9c" stroke-width="2"/><circle cx="298" cy="99.5" r="1.5" fill="#9c9c9c"/><circle cx="298" cy="105.5" r="1.5" fill="#9c9c9c"/><circle cx="291" cy="108" r="1.5" fill="#9c9c9c"/><path d="M293 102.5l5-3M293 104l5 1.5" stroke="#b0b0b0" stroke-width="0.8"/><path d="M309 95.5h3.2v-3h3.2v3h3.2v3.2h-3.2v3h-3.2v-3H309z" fill="#3b7fc8" stroke="#2a62a0" stroke-width="0.5"/><path d="M311 100.5h3v-2.5h3.6v2.5h3v3.5h-3v3h-3.6v-3h-3z" fill="#3d9a2a" stroke="#2a7a1c" stroke-width="0.5"/><path d="M317 95l3-2.5M318 99l4 2" stroke="#2a7a1c" stroke-width="1.4"/><circle cx="322" cy="97" r="1.5" fill="#d81818"/><circle cx="322.5" cy="103.5" r="1.5" fill="#d81818"/><circle cx="316" cy="108" r="1.5" fill="#d81818"/><path d="M316 108v-4M322.5 103.5l-3-1" stroke="#777" stroke-width="0.6"/></svg><svg class="a" style="left:179.5px;top:65.0px" width="6" height="4"><path d="M0 0h6l-3 3.5z" fill="#666"/></svg><svg class="a" style="left:247.5px;top:65.0px" width="6" height="4"><path d="M0 0h6l-3 3.5z" fill="#111"/></svg><svg class="a" style="left:330px;top:65.0px" width="6" height="4"><path d="M0 0h6l-3 3.5z" fill="#111"/></svg><i class="a" style="left:214px;top:55px;width:1px;height:20px;background:#d4d4d4"></i><i class="a" style="left:215px;top:55px;width:1px;height:20px;background:#fbfbfb"></i><svg class="a" style="left:218px;top:56px" width="3" height="20"><rect x="0" y="0.0" width="1" height="1" fill="#b8b8b8"/><rect x="1" y="1.0" width="1" height="1" fill="#fff"/><rect x="0" y="2.6" width="1" height="1" fill="#b8b8b8"/><rect x="1" y="3.6" width="1" height="1" fill="#fff"/><rect x="0" y="5.2" width="1" height="1" fill="#b8b8b8"/><rect x="1" y="6.2" width="1" height="1" fill="#fff"/><rect x="0" y="7.8" width="1" height="1" fill="#b8b8b8"/><rect x="1" y="8.8" width="1" height="1" fill="#fff"/><rect x="0" y="10.4" width="1" height="1" fill="#b8b8b8"/><rect x="1" y="11.4" width="1" height="1" fill="#fff"/><rect x="0" y="13.0" width="1" height="1" fill="#b8b8b8"/><rect x="1" y="14.0" width="1" height="1" fill="#fff"/><rect x="0" y="15.6" width="1" height="1" fill="#b8b8b8"/><rect x="1" y="16.6" width="1" height="1" fill="#fff"/></svg></div>
<div id="combo" class="a"></div>
<div id="cvtitle" class="a"><span>Combo View</span>
<svg class="a" style="left:271.5px;top:3px" width="7" height="7" viewBox="0 0 8 8"><rect x="2.5" y="0.5" width="5" height="4.5" fill="none" stroke="#222" stroke-width="1"/><rect x="0.5" y="3" width="5" height="4.5" fill="#e1e1e1" stroke="#222" stroke-width="1"/></svg></div>
<div id="tabModel" class="tab"><span style="display:inline-block;transform:scaleX(.89)">Model</span></div><div id="tabTasks" class="tab"><span style="display:inline-block;transform:scaleX(.84)">Tasks</span></div>
<div id="panel" class="a">
 <div class="btn" style="left:103px;top:15px;width:56px;height:15.500px;padding-top:1.700px"><span style="display:inline-block;transform:scaleX(.86)">Close</span></div>
 <div class="box" id="b1" style="top:45px;height:106px">
  <div class="hd"><i class="pg"></i><b style="transform:scaleX(.98)">Solver messages</b><svg class="a" style="left:236.500px;top:4px" width="12" height="12" viewBox="0 0 12 12"><circle cx="6" cy="6" r="5.4" fill="#fff" stroke="#b9c6ee" stroke-width="0.8"/><path d="M3.6 5.6L6 3.2L8.4 5.6M3.6 8.8L6 6.4L8.4 8.800" fill="none" stroke="#1f3f9a" stroke-width="1.3"/></svg></div>
  <span class="t g" style="left:11px;top:30.3px;transform:scaleX(0.968)">Fully constrained sketch</span>
  <span class="t g" style="left:11px;top:46.3px;transform:scaleX(0.977)">Solved in 0 sec</span>
  <svg class="a" style="left:11px;top:81px" width="10" height="10" viewBox="0 0 10 10"><rect x="0.5" y="0.5" width="9" height="9" fill="#fff" stroke="#333"/><path d="M2.2 5.2L4.200 7.200L7.900 2.800" fill="none" stroke="#111" stroke-width="1.2"/></svg><span class="t" style="left:25px;top:80.7px;transform:scaleX(0.873)">Auto Update</span>
  <div class="btn" style="left:128px;top:78px;width:111px;height:16px;padding-top:2px"><span style="display:inline-block;transform:scaleX(.91)">Update</span></div>
 </div>
 <div class="box" id="b2" style="top:158px;height:20px">
  <div class="hd"><i class="pg"></i><b style="transform:scaleX(.95)">Edit controls</b><svg class="a" style="left:236.500px;top:4px" width="12" height="12" viewBox="0 0 12 12"><circle cx="6" cy="6" r="5.4" fill="#fff" stroke="#b9c6ee" stroke-width="0.8"/><path d="M3.6 5.6L6 3.2L8.4 5.6M3.6 8.8L6 6.4L8.4 8.800" fill="none" stroke="#1f3f9a" stroke-width="1.3"/></svg></div>
 </div>
 <div class="box" id="b3" style="top:186px;height:180px">
  <div class="hd"><i class="pg"></i><b style="transform:scaleX(.975)">Constraints</b><svg class="a" style="left:236.500px;top:4px" width="12" height="12" viewBox="0 0 12 12"><circle cx="6" cy="6" r="5.4" fill="#fff" stroke="#b9c6ee" stroke-width="0.8"/><path d="M3.6 5.6L6 3.2L8.4 5.6M3.6 8.8L6 6.4L8.4 8.800" fill="none" stroke="#1f3f9a" stroke-width="1.3"/></svg></div>
  <span class="t" style="left:11px;top:31.7px;transform:scaleX(0.873)">Filter:</span>
  <div class="btn" style="left:128px;top:30px;width:112px;height:15px;text-align:left;padding:1px 0 0 3px;border-color:#b4b4b4;font-size:9.800px"><span style="display:inline-block;transform:scaleX(.8);transform-origin:0 50%">All</span><svg class="a" style="left:100px;top:5px" width="7" height="4"><path d="M0 0h7l-3.500 4z" fill="#111"/></svg></div>
  <svg class="a" style="left:11px;top:52px" width="10" height="10" viewBox="0 0 10 10"><rect x="0.5" y="0.5" width="9" height="9" fill="#fff" stroke="#333"/><path d="M2.2 5.2L4.200 7.200L7.900 2.800" fill="none" stroke="#111" stroke-width="1.2"/></svg><span class="t" style="left:25px;top:51.7px;transform:scaleX(0.876)">Hide Internal Aligment</span>
  <div id="list" class="a" style="left:11px;top:68px;width:229px;height:120px;background:#fff;border:1px solid #828790;overflow:hidden"><svg class="a" style="left:0;top:0" width="20" height="100"><circle cx="10" cy="8.0" r="2.2" fill="#b0141a"/><circle cx="10" cy="22.1" r="2.2" fill="#b0141a"/><circle cx="10" cy="36.2" r="2.2" fill="#b0141a"/><circle cx="10" cy="50.3" r="2.2" fill="#b0141a"/><circle cx="10" cy="64.4" r="2.2" fill="#b0141a"/><circle cx="10" cy="78.5" r="2.2" fill="#b0141a"/></svg><span class="t" style="left:21px;top:2.7px">Constraint1</span><span class="t" style="left:21px;top:16.8px">Constraint2</span><span class="t" style="left:21px;top:30.9px">Constraint3</span><span class="t" style="left:21px;top:45.0px">Constraint4</span><span class="t" style="left:21px;top:59.1px">Constraint5</span><span class="t" style="left:21px;top:73.2px">Constraint6</span><i class="a" style="left:6px;top:88.8px;width:8px;height:2.6px;background:#c01a20"></i><i class="a" style="left:6px;top:93.0px;width:8px;height:2.6px;background:#c01a20"></i><span class="t" style="left:21px;top:87.3px">Constraint7</span><div class="a" style="left:213px;top:0;width:12.500px;height:118px;background:#f0f0f0"><div class="a" style="left:0.500px;top:14px;width:11.500px;height:27px;background:#c6c6c6"></div><svg class="a" style="left:3px;top:5px" width="7" height="5" viewBox="0 0 7 5"><path d="M0.5 4.2L3.5 1.2L6.5 4.2" fill="none" stroke="#333" stroke-width="1.2"/></svg></div></div>
 </div>
 <div id="sb" class="a" style="left:262.5px;top:0;width:13px;height:358px;background:#f0f0f0"><div class="a" style="left:0;top:0;width:13px;height:13px;background:#fbfbfb;border:1px solid #dadada"></div><div class="a" style="left:0;top:14px;width:13px;height:164px;background:#cdcdcd"></div><svg class="a" style="left:2.5px;top:4.5px" width="7" height="5" viewBox="0 0 7 5"><path d="M0.5 4.2L3.500 1.200L6.500 4.200" fill="none" stroke="#333" stroke-width="1.2"/></svg><svg class="a" style="left:2.5px;top:347px" width="7" height="5" viewBox="0 0 7 5"><path d="M0.5 0.8L3.500 3.800L6.500 0.800" fill="none" stroke="#333" stroke-width="1.2"/></svg></div>
</div>
<div id="view" class="a"><svg class="a" style="left:0.5px;top:0" width="514" height="377" viewBox="286 115 514 377" font-family="Liberation Sans, sans-serif">
<g fill="none" stroke="#d8d8e4" stroke-width="0.9" stroke-dasharray="3 2.5" opacity="0.6">
<path d="M347.6 142.5L350.7 284L353 428L353.8 492"/>
<path d="M492 141L492.6 175"/><path d="M496 388L497.2 492"/>
<path d="M636.3 135L640 330L641.8 425L643 492"/>
<path d="M781.7 133L785 330L785.7 425L787 492"/>
<path d="M350.7 284.3L388 283.8"/>
<path d="M780 277.5L800 277"/>
<path d="M353 428L540 425.7L800 421.9"/>
</g>
<!-- axes -->
<path d="M388 283.800L800 277" stroke="#e2605c" stroke-width="1.300" fill="none"/>
<path d="M492.6 175L496 388" stroke="#45e04a" stroke-width="1.3" fill="none"/>
<!-- circles -->
<g fill="none" stroke="#0a14d8" stroke-width="2.4">
<circle cx="552.3" cy="281" r="58.4"/>
<circle cx="678" cy="351" r="57.8"/>
<path d="M581.4 331.2L620.5 352"/>
</g>
<g fill="none" stroke="#2ee02e" stroke-width="2.4" stroke-linejoin="round">
<path d="M522.5 231L580.1 230.5L609 280.5L581.4 331.2L524.5 331.9L494.8 282.5Z"/>
<path d="M648.8 300.2L706.3 300.2L735.5 350L707.9 401.3L650 402.4L620.5 352Z"/>
</g>
<g fill="#2ee62e">
<circle cx="522.5" cy="231" r="3"/><circle cx="580.1" cy="230.5" r="3"/><circle cx="609" cy="280.5" r="3"/><circle cx="581.4" cy="331.2" r="3"/><circle cx="524.5" cy="331.9" r="3"/><circle cx="494.8" cy="282.5" r="3.2"/>
<circle cx="648.8" cy="300.2" r="3"/><circle cx="706.3" cy="300.2" r="3"/><circle cx="735.5" cy="350" r="3"/><circle cx="707.9" cy="401.3" r="3"/><circle cx="650" cy="402.4" r="3"/><circle cx="620.5" cy="352" r="3"/>
<circle cx="552.5" cy="281.2" r="2.4"/><circle cx="678" cy="351" r="2.4"/>
</g>
<g id="ann"><path d="M523 244.5L523.6 240Q524 237.5 527 237.2L532 236.6" stroke="#f03020" stroke-width="2.200" fill="none" stroke-linecap="round"/><circle cx="524.6" cy="238.8" r="1.7" fill="#f03020"/><path d="M543 239h8M543 242.6h8" stroke="#f03020" stroke-width="1.9" fill="none"/><text x="554" y="247" font-family="Liberation Serif, serif" font-style="italic" font-weight="bold" font-size="7.5" fill="#e8382a" stroke="#e8382a" stroke-width="0.35">10</text><path d="M572.5 244.5L573.1 240Q573.5 237.5 576.5 237.2L581.5 236.6" stroke="#f03020" stroke-width="2.200" fill="none" stroke-linecap="round"/><circle cx="574.1" cy="238.8" r="1.7" fill="#f03020"/><path d="M507.7 259.5h8M507.7 263.1h8" stroke="#f03020" stroke-width="1.9" fill="none"/><text x="520" y="267" font-family="Liberation Serif, serif" font-style="italic" font-weight="bold" font-size="7.5" fill="#e8382a" stroke="#e8382a" stroke-width="0.35">11</text><path d="M580 258.8h8M580 262.40000000000003h8" stroke="#f03020" stroke-width="1.9" fill="none"/><text x="591" y="267" font-family="Liberation Serif, serif" font-style="italic" font-weight="bold" font-size="7.5" fill="#e8382a" stroke="#e8382a" stroke-width="0.35">9</text><path d="M499.5 284.5L500.1 280Q500.5 277.5 503.5 277.2L508.5 276.6" stroke="#f03020" stroke-width="2.200" fill="none" stroke-linecap="round"/><circle cx="501.1" cy="278.8" r="1.7" fill="#f03020"/><path d="M579 298.0h8.5M583.2 298.0v-8.5" stroke="#f03020" stroke-width="1.9" fill="none"/><text x="589" y="300.5" font-family="Liberation Serif, serif" font-style="italic" font-weight="bold" font-size="7.5" fill="#e8382a" stroke="#e8382a" stroke-width="0.35">41</text><path d="M580 306.5h7.5M580 310.1h7.5" stroke="#f03020" stroke-width="1.9" fill="none"/><ellipse cx="597" cy="310" rx="6" ry="7" fill="#e8382a" opacity="0.85" transform="rotate(25 597 310)"/><path d="M485 300h8M485 303.6h8" stroke="#f03020" stroke-width="1.9" fill="none"/><text x="496" y="308.5" font-family="Liberation Serif, serif" font-style="italic" font-weight="bold" font-size="7.5" fill="#e8382a" stroke="#e8382a" stroke-width="0.35" textLength="55" lengthAdjust="spacingAndGlyphs">12, 7, 8, 9, 10</text><path d="M538 314h8M538 317.6h8" stroke="#f03020" stroke-width="1.9" fill="none"/><text x="549" y="322" font-family="Liberation Serif, serif" font-style="italic" font-weight="bold" font-size="7.5" fill="#e8382a" stroke="#e8382a" stroke-width="0.35" textLength="19" lengthAdjust="spacingAndGlyphs">37, 7</text><path d="M525 327.5L525.6 323Q526 320.5 529 320.2L534 319.6" stroke="#f03020" stroke-width="2.200" fill="none" stroke-linecap="round"/><circle cx="526.6" cy="321.8" r="1.7" fill="#f03020"/><path d="M572.5 327.0L573.1 322.5Q573.5 320.0 576.5 319.7L581.5 319.1" stroke="#f03020" stroke-width="2.200" fill="none" stroke-linecap="round"/><circle cx="574.1" cy="321.3" r="1.7" fill="#f03020"/><path d="M536.5 330.2h11" stroke="#f03020" stroke-width="1.8" fill="none"/><path d="M598 337.5h8.5M602.2 337.5v-8.5" stroke="#f03020" stroke-width="1.9" fill="none"/><text x="608" y="340" font-family="Liberation Serif, serif" font-style="italic" font-weight="bold" font-size="7.5" fill="#e8382a" stroke="#e8382a" stroke-width="0.35">41</text><text x="0" y="0" transform="translate(605.5 318) rotate(31)" font-size="17" font-style="italic" font-weight="bold" fill="#cc3c32" font-family="Liberation Sans, sans-serif" textLength="29" lengthAdjust="spacingAndGlyphs">mm</text><path d="M581.4 331.2L605 288" stroke="#ff8c18" stroke-width="1.500" stroke-dasharray="1.300 1.100" fill="none"/><path d="M620.5 352L648.8 300.2" stroke="#ff8c18" stroke-width="1.500" stroke-dasharray="1.300 1.100" fill="none"/><path d="M609 280.5L598 276.5L599 285Z" fill="#f03020"/><circle cx="600" cy="280" r="3.2" fill="#f03020"/><path d="M648 312.5L648.6 308Q649 305.5 652 305.2L657 304.6" stroke="#f03020" stroke-width="2.200" fill="none" stroke-linecap="round"/><circle cx="649.6" cy="306.8" r="1.7" fill="#f03020"/><path d="M669 307.6h8M669 311.20000000000005h8" stroke="#f03020" stroke-width="1.9" fill="none"/><text x="679" y="317" font-family="Liberation Serif, serif" font-style="italic" font-weight="bold" font-size="7.5" fill="#e8382a" stroke="#e8382a" stroke-width="0.35">27</text><path d="M696 312.5L696.6 308Q697 305.5 700 305.2L705 304.6" stroke="#f03020" stroke-width="2.200" fill="none" stroke-linecap="round"/><circle cx="697.6" cy="306.8" r="1.7" fill="#f03020"/><path d="M632.5 329.8h9M632.5 333.40000000000003h9" stroke="#f03020" stroke-width="1.9" fill="none"/><text x="644" y="337.5" font-family="Liberation Serif, serif" font-style="italic" font-weight="bold" font-size="7.5" fill="#e8382a" stroke="#e8382a" stroke-width="0.35">28</text><path d="M704 327.8h8M704 331.40000000000003h8" stroke="#f03020" stroke-width="1.9" fill="none"/><text x="714" y="336.5" font-family="Liberation Serif, serif" font-style="italic" font-weight="bold" font-size="7.5" fill="#e8382a" stroke="#e8382a" stroke-width="0.35">26</text><path d="M724 354.0L724.6 349.5Q725 347.0 728 346.7L733 346.1" stroke="#f03020" stroke-width="2.200" fill="none" stroke-linecap="round"/><circle cx="725.6" cy="348.3" r="1.7" fill="#f03020"/><path d="M624.6 355.5L625.2 351Q625.6 348.5 628.6 348.2L633.6 347.6" stroke="#f03020" stroke-width="2.200" fill="none" stroke-linecap="round"/><circle cx="626.2" cy="349.8" r="1.7" fill="#f03020"/><path d="M602 370h9M602 373.6h9" stroke="#f03020" stroke-width="1.9" fill="none"/><text x="613.8" y="379" font-family="Liberation Serif, serif" font-style="italic" font-weight="bold" font-size="7.5" fill="#e8382a" stroke="#e8382a" stroke-width="0.35" textLength="73" lengthAdjust="spacingAndGlyphs">28, 24, 25, 26, 27</text><path d="M704 368.8h9M704 372.40000000000003h9" stroke="#f03020" stroke-width="1.9" fill="none"/><text x="715.7" y="377.5" font-family="Liberation Serif, serif" font-style="italic" font-weight="bold" font-size="7.5" fill="#e8382a" stroke="#e8382a" stroke-width="0.35">25</text><path d="M661 383h8M661 386.6h8" stroke="#f03020" stroke-width="1.9" fill="none"/><text x="672" y="391.5" font-family="Liberation Serif, serif" font-style="italic" font-weight="bold" font-size="7.5" fill="#e8382a" stroke="#e8382a" stroke-width="0.35" textLength="25" lengthAdjust="spacingAndGlyphs">37, 24</text><path d="M650 396.5L650.6 392Q651 389.5 654 389.2L659 388.6" stroke="#f03020" stroke-width="2.200" fill="none" stroke-linecap="round"/><circle cx="651.6" cy="390.8" r="1.7" fill="#f03020"/><path d="M697 396.0L697.6 391.5Q698 389.0 701 388.7L706 388.1" stroke="#f03020" stroke-width="2.200" fill="none" stroke-linecap="round"/><circle cx="698.6" cy="390.3" r="1.7" fill="#f03020"/><path d="M660.5 399.3h11" stroke="#f03020" stroke-width="1.8" fill="none"/></g>
<!-- dimension 4mm -->
<path d="M609 280.300L722 278.600" stroke="#e03c30" stroke-width="1.500" fill="none"/><path d="M552.500 281L609 280.300" stroke="#f22416" stroke-width="2" fill="none"/>
<path d="M609 280.3L599 277L599 284Z" fill="#f0281c"/>
<text x="727" y="285.5" font-size="16" font-weight="bold" fill="#bc3a38" textLength="46" lengthAdjust="spacingAndGlyphs">4 mm</text>
</svg></div>
<div id="tabs" class="a">
<div class="a" style="left:1px;top:0.500px;width:87px;height:17px;background:#f0f0f0;border:1px solid #d9d9d9;border-top:none"></div>
<svg class="a" style="left:8.5px;top:3.5px" width="12" height="12" viewBox="0 0 12 12"><circle cx="6" cy="6" r="5.5" fill="#2f78d8"/><path d="M2 4c1.5-2.5 5-3 7-1c-1 .5-2 0-2.500 1c.5 1 2 1 2 2.500c-1 1-2 .5-3 1.500c-1-1-.5-2-2-2.500c-.5-.5-1-1-1.500-1.500z" fill="#8fd0f4"/><circle cx="4.500" cy="3.500" r="1.500" fill="#e8f6ff" opacity="0.8"/></svg>
<span class="t" style="left:24px;top:4.2px;transform:scaleX(0.883)">Start page</span>
<svg class="a" style="left:68px;top:5px" width="11" height="10" viewBox="0 0 11 10"><rect x="0.500" y="0.500" width="10" height="9" rx="1" fill="#c4c4c4" stroke="#a8a8a8"/><path d="M3.500 3l4 4M7.500 3l-4 4" stroke="#fff" stroke-width="1.400"/></svg>
<div class="a" style="left:88.500px;top:0.500px;width:96.500px;height:19px;background:#fff;border:1px solid #dedede;border-top:none"></div>
<svg class="a" style="left:99px;top:4px" width="13" height="13" viewBox="0 0 14 14"><path d="M1 0.500h8v3H4.500v2.500H8v3H4.500V13H1z" fill="#d0242a"/><g fill="#2f55a8"><circle cx="9" cy="9" r="3.400"/><path d="M9 4.200l1 1.600h-2zM9 13.800l1-1.600h-2zM4.200 9l1.600 1v-2zM13.800 9l-1.600 1v-2zM5.600 5.600l1.900.5-1.400 1.400zM12.400 12.400l-1.900-.5 1.400-1.400zM12.400 5.600l-.5 1.900-1.400-1.400zM5.600 12.400l.5-1.900 1.400 1.400z"/></g><circle cx="9" cy="9" r="1.400" fill="#9fb4e6"/></svg>
<span class="t" style="left:114.500px;top:4.2px;transform:scaleX(0.902)">Tutorial : 1*</span>
<svg class="a" style="left:163px;top:5px" width="11" height="10" viewBox="0 0 11 10"><rect x="0.500" y="0.500" width="10" height="9" rx="1" fill="#dc6840" stroke="#c2502c"/><path d="M3.500 3l4 4M7.500 3l-4 4" stroke="#fff" stroke-width="1.500"/></svg>
</div>
<div id="status" class="a"></div>
<div id="taskbar" class="a">
<div class="a" style="left:0;top:0;width:800px;height:32px;background:linear-gradient(90deg,#28221e 0%,#2c2520 3%,#41362b 8%,#3a3027 12%,#322a24 18%,#372d25 30%,#3a3027 34%,#2f261f 47%,#261e18 53%,#2e241b 58%,#4a3b2b 65%,#46382a 72%,#33281e 75.500%,#46382a 79%,#43352a 90%,#3d3026 100%)"></div><div class="a" style="left:380px;top:14px;width:110px;height:18px;background:radial-gradient(ellipse 55px 14px at 50% 100%,rgba(20,15,11,.7),rgba(0,0,0,0))"></div>
<div class="a" style="left:270px;top:0;width:38px;height:32px;background:#4d4743"></div>
<svg class="a" style="left:0;top:0" width="800" height="32" viewBox="0 534 800 32" font-family="Liberation Sans, sans-serif">
<!-- windows -->
<path d="M11.800 545.600l5.700-.8v5.200h-5.700zM18.300 544.700l6.900-1v6.300h-6.900zM11.800 550.800h5.700v5.200l-5.700-.8zM18.300 550.800h6.900v6.300l-6.900-1z" fill="#fff"/>
<!-- task view -->
<rect x="52.500" y="545" width="9" height="10.500" fill="none" stroke="#fff" stroke-width="1.200"/><path d="M50.500 546.500h-1.800v7.500h1.800M63.500 546.500h1.800v7.500h-1.800" fill="none" stroke="#fff" stroke-width="1.100"/>
<!-- store -->
<path d="M88 546.500l16-2.300v15.500l-16-2.300z" fill="#fff"/><path d="M92.500 545.500c0-5 6.500-5 6.500-.9" fill="none" stroke="#fff" stroke-width="1.100"/><path d="M91 548.800l4.200-.5v3.600H91zM96.200 548.200l4.800-.6v4.300h-4.800zM91 552.900h4.200v3.600l-4.200-.5zM96.200 552.900h4.800v4.300l-4.800-.6z" fill="#2a221c"/>
<!-- purple -->
<rect x="127" y="543" width="16" height="14.500" rx="1.500" fill="#3c1244"/><path d="M127.500 553v3.500q0 1.500 1.500 1.500h12q1.500 0 1.500-1.500v-3.500" fill="none" stroke="#d8a422" stroke-width="1.300"/><path d="M131 544v10M135 544v11M139 544v10" stroke="#6a3a78" stroke-width="1.500"/><circle cx="135" cy="554" r="1.500" fill="#9a8aa8"/>
<!-- chrome -->
<circle cx="173.200" cy="550.300" r="8.800" fill="#e33b2e"/><path d="M173.200 550.300L165.600 545.900A8.800 8.800 0 0 0 168.800 557.900z" fill="#2da94f"/><path d="M173.200 550.300L168.800 557.900A8.800 8.800 0 0 0 173.200 559.100A8.800 8.800 0 0 0 180.800 545.900z" fill="#fcc934"/><path d="M165.600 545.900A8.800 8.800 0 0 1 180.800 545.900L173.200 546z" fill="#e33b2e"/><path d="M173.200 550.300L165.600 545.900A8.800 8.800 0 0 0 173.200 559.100L177.600 551.500z" fill="#2da94f"/><path d="M177 552.500L173.200 559.100A8.800 8.800 0 0 0 180.800 545.900H173.200z" fill="#fcc934"/><circle cx="173.200" cy="550.300" r="4.300" fill="#fff"/><circle cx="173.200" cy="550.300" r="3.300" fill="#4a8af4"/>
<!-- explorer -->
<path d="M203.600 545h6l1.500 1.500h9.500v11h-17z" fill="#f6d36a"/><rect x="203.600" y="547.500" width="17" height="10" fill="#fae08e"/><path d="M207.500 557.500v-5h9.500v5h-2.500v-2.500h-4.500v2.500z" fill="#3aa0dc"/><rect x="207.500" y="551.500" width="9.500" height="2" fill="#58b8ec"/>
<!-- M -->
<rect x="241.700" y="540.200" width="18.500" height="19" fill="#c4101a"/><path d="M241.700 556h18.500v3.200h-18.500z" fill="#9c0c14"/><text x="251" y="555" font-size="13.500" font-weight="bold" fill="#fff" text-anchor="middle">M</text>
<!-- freecad -->
<path d="M280 541.500h10v4h-5.500v3h4v4h-4v6H280z" fill="#e8401c"/><path d="M280 541.500h3v17h-3z" fill="#c02a14"/><g fill="#2c54b0"><circle cx="291.500" cy="552" r="5"/><path d="M291.500 545l1.600 2.500h-3.200zM291.500 559l1.600-2.500h-3.200zM284.500 552l2.500 1.600v-3.200zM298.500 552l-2.500 1.600v-3.200zM286.500 547l3 .7-2.200 2.200zM296.500 557l-3-.7 2.200-2.200zM296.500 547l-.7 3-2.200-2.200zM286.500 557l.7-3 2.200 2.200z"/></g><circle cx="291.500" cy="552" r="2.200" fill="#6a8ad8"/>
<!-- word -->
<rect x="325" y="542.500" width="11" height="15" fill="#fff"/><path d="M327 545.500h8M327 548h8M327 550.500h8M327 553h8M327 555.500h8" stroke="#2b579a" stroke-width="0.800"/><path d="M318.200 543l10-1.500v17.500l-10-1.500z" fill="#2b579a"/><text x="323.200" y="554" font-size="8" font-weight="bold" fill="#fff" text-anchor="middle">W</text>
<!-- last -->
<circle cx="367" cy="550.200" r="9.300" fill="#c9d6c2"/><circle cx="367" cy="550.200" r="9.300" fill="none" stroke="#8fa48c" stroke-width="1"/><path d="M359.500 545.500a9.300 9.300 0 0 1 15 0z" fill="#e8ece0"/><rect x="362" y="543" width="10" height="3" rx="1" fill="#b0342c"/><path d="M367 549v5M364 553l3 3.500 3-3.500z" fill="#2a78c8" stroke="#2a78c8" stroke-width="1.200"/><path d="M358.500 553a9.300 9.300 0 0 0 17 0z" fill="#7fae96" opacity="0.700"/>
<!-- underlines -->
<g fill="#bdbdbd"><rect x="158" y="564.500" width="31" height="1.500"/><rect x="196.300" y="564.500" width="31" height="1.500"/><rect x="270.400" y="564.500" width="37.600" height="1.500" fill="#d8d8d8"/><rect x="311.800" y="564.500" width="32" height="1.500"/><rect x="350.700" y="564.500" width="31.500" height="1.500"/></g>
<!-- tray -->
<path d="M751 552l4-4 4 4" fill="none" stroke="#fff" stroke-width="1.300"/>
<g fill="none" stroke="#fff" stroke-width="1.100"><path d="M776.500 554a7.500 7.500 0 0 1 7.500-7.500"/><path d="M779 554a5 5 0 0 1 5-5" opacity="0.900"/><path d="M781.500 554a2.500 2.500 0 0 1 2.500-2.500"/></g><circle cx="784" cy="553.800" r="1" fill="#fff"/>
<rect x="798" y="546" width="2" height="6" fill="#ddd"/>
</svg></div>
</body></html>
